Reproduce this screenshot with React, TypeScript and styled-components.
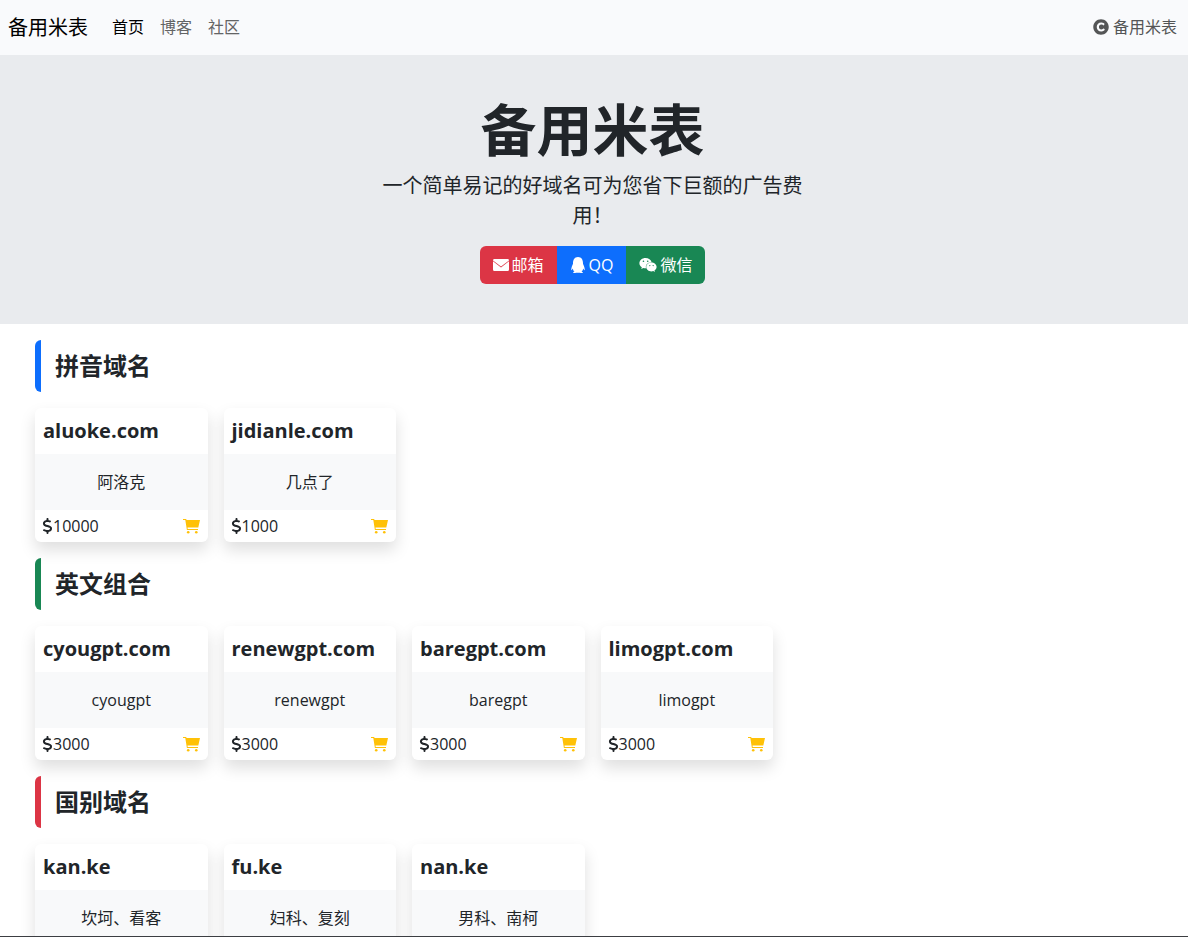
import React from 'react';
import styled, { createGlobalStyle } from 'styled-components';
import { FaCopyright, FaQq, FaWeixin } from 'react-icons/fa';
import { FaDollarSign } from 'react-icons/fa6';

const colors = {
  text: '#212529',
  light: '#f8f9fa',
  blue: '#0d6efd',
  green: '#198754',
  red: '#dc3545',
  yellow: '#ffc107',
};

const GlobalStyle = createGlobalStyle`
  *, *::before, *::after { box-sizing: border-box; }
  body {
    margin: 0;
    background: #fff;
    color: ${colors.text};
    font-family: "Open Sans", "Noto Sans CJK SC", sans-serif;
    font-size: 16px;
    line-height: 24px;
  }
  h1, h2, h3, p { margin: 0; }
`;

const Page = styled.div`
  display: flex;
  flex-direction: column;
  height: 100vh;
  overflow: hidden;
`;

const Navbar = styled.nav`
  display: flex;
  flex: none;
  align-items: center;
  padding: 8px 11px 8px 8px;
  background: #f9fafc;
`;

const Brand = styled.a`
  margin-right: 16px;
  padding: 5px 0 4px;
  color: #000;
  font-size: 20px;
  line-height: 30px;
  text-decoration: none;
`;

const NavList = styled.div`
  display: flex;
  flex: 1;
`;

const NavLink = styled.a<{ $active?: boolean }>`
  padding: 6px 8px 8px;
  color: ${(p) => (p.$active ? '#000' : '#636465')};
  text-decoration: none;
`;

const Owner = styled.a`
  display: flex;
  align-items: center;
  gap: 4px;
  padding: 6px 0 8px;
  color: #545556;
  text-decoration: none;
`;

const Hero = styled.header`
  display: flex;
  flex: none;
  flex-direction: column;
  align-items: center;
  padding: 41px 3px 40px 0;
  background: #e9ebee;
  text-align: center;
`;

const HeroTitle = styled.h1`
  font-size: 56px;
  font-weight: 700;
  line-height: 67px;
  margin-bottom: 8px;
`;

const Lead = styled.p`
  max-width: 424px;
  margin-bottom: 15px;
  font-size: 20px;
  line-height: 30px;
`;

const ButtonGroup = styled.div`
  display: flex;
  overflow: hidden;
  border-radius: 6px;
`;

const ContactButton = styled.button<{ $color: string }>`
  display: flex;
  align-items: center;
  gap: 3px;
  padding: 7px 13px;
  border: 0;
  background: ${(p) => p.$color};
  color: #fff;
  font: inherit;
  cursor: pointer;
`;

const Main = styled.main`
  flex: 1;
  min-height: 0;
  padding: 16px 38px 0 35px;
`;

const Section = styled.section`
  margin-bottom: 16px;
`;

const SectionTitle = styled.h2<{ $color: string }>`
  margin-bottom: 16px;
  padding: 12px 14px;
  border-left: 6px solid ${(p) => p.$color};
  border-radius: 6px;
  font-size: 24px;
  font-weight: 700;
  line-height: 28px;
`;

const Cards = styled.div`
  display: grid;
  grid-template-columns: repeat(6, minmax(0, 1fr));
  gap: 16px;
`;

const Card = styled.article`
  overflow: hidden;
  border-radius: 6px;
  background: #fff;
  box-shadow: 0 8px 16px rgba(0, 0, 0, 0.13);
`;

const Domain = styled.h3`
  padding: 8px;
  font-size: 20px;
  font-weight: 700;
  line-height: 30px;
`;

const Meaning = styled.p`
  padding: 16px 8px;
  background: ${colors.light};
  text-align: center;
`;

const CardFooter = styled.div`
  display: flex;
  align-items: center;
  justify-content: space-between;
  padding: 4px 8px 4px 7px;
`;

const Price = styled.span`
  display: flex;
  align-items: center;
`;

const DollarIcon = styled(FaDollarSign)`
  width: 11px;
  height: 16px;
`;

const BuyLink = styled.a`
  display: flex;
  color: ${colors.yellow};
`;

const BottomEdge = styled.div`
  position: fixed;
  inset: auto 0 0;
  height: 1px;
  background: #3c3e42;
`;

const EnvelopeIcon = () => (
  <svg width="16" height="16" viewBox="0 0 17 16" preserveAspectRatio="none" aria-hidden="true">
    <path fill="currentColor" d="M1.5 2h14Q17 2 17 3.4L8.5 9.6 0 3.4Q0 2 1.5 2z" />
    <path fill="currentColor" d="M0 4.300l8.500 6.200L17 4.300v8.200Q17 14 15.500 14h-14Q0 14 0 12.500z" />
  </svg>
);

const CartIcon = () => (
  <svg width="17" height="16" viewBox="0 0 17 16" fill="currentColor" aria-hidden="true">
    <path d="M0 1h3.200l.3 1H17l-1.700 7.500H4.500l.2 1.500h10.300v.9H3.900L2.300 2H0z" />
    <circle cx="5.200" cy="14.200" r="1.300" />
    <circle cx="13.300" cy="14.200" r="1.300" />
  </svg>
);

type Item = { domain: string; meaning: string; price?: number };

const sections: { title: string; color: string; items: Item[] }[] = [
  {
    title: '拼音域名',
    color: colors.blue,
    items: [
      { domain: 'aluoke.com', meaning: '阿洛克', price: 10000 },
      { domain: 'jidianle.com', meaning: '几点了', price: 1000 },
    ],
  },
  {
    title: '英文组合',
    color: colors.green,
    items: [
      { domain: 'cyougpt.com', meaning: 'cyougpt', price: 3000 },
      { domain: 'renewgpt.com', meaning: 'renewgpt', price: 3000 },
      { domain: 'baregpt.com', meaning: 'baregpt', price: 3000 },
      { domain: 'limogpt.com', meaning: 'limogpt', price: 3000 },
    ],
  },
  {
    title: '国别域名',
    color: colors.red,
    items: [
      { domain: 'kan.ke', meaning: '坎坷、看客' },
      { domain: 'fu.ke', meaning: '妇科、复刻' },
      { domain: 'nan.ke', meaning: '男科、南柯' },
    ],
  },
];

const DomainCard = ({ domain, meaning, price }: Item) => (
  <Card>
    <Domain>{domain}</Domain>
    <Meaning>{meaning}</Meaning>
    {price !== undefined && (
      <CardFooter>
        <Price>
          <DollarIcon />
          {price}
        </Price>
        <BuyLink href="#" aria-label={domain}>
          <CartIcon />
        </BuyLink>
      </CardFooter>
    )}
  </Card>
);

export default function App() {
  return (
    <Page>
      <GlobalStyle />
      <Navbar>
        <Brand href="#">备用米表</Brand>
        <NavList>
          <NavLink href="#" $active>首页</NavLink>
          <NavLink href="#">博客</NavLink>
          <NavLink href="#">社区</NavLink>
        </NavList>
        <Owner href="#">
          <FaCopyright size={16} />
          备用米表
        </Owner>
      </Navbar>
      <Hero>
        <HeroTitle>备用米表</HeroTitle>
        <Lead>一个简单易记的好域名可为您省下巨额的广告费用！</Lead>
        <ButtonGroup>
          <ContactButton type="button" $color={colors.red}><EnvelopeIcon />邮箱</ContactButton>
          <ContactButton type="button" $color={colors.blue}><FaQq size={16} />QQ</ContactButton>
          <ContactButton type="button" $color={colors.green}><FaWeixin size={18} />微信</ContactButton>
        </ButtonGroup>
      </Hero>
      <Main>
        {sections.map((section) => (
          <Section key={section.title}>
            <SectionTitle $color={section.color}>{section.title}</SectionTitle>
            <Cards>
              {section.items.map((item) => (
                <DomainCard key={item.domain} {...item} />
              ))}
            </Cards>
          </Section>
        ))}
      </Main>
      <BottomEdge />
    </Page>
  );
}
